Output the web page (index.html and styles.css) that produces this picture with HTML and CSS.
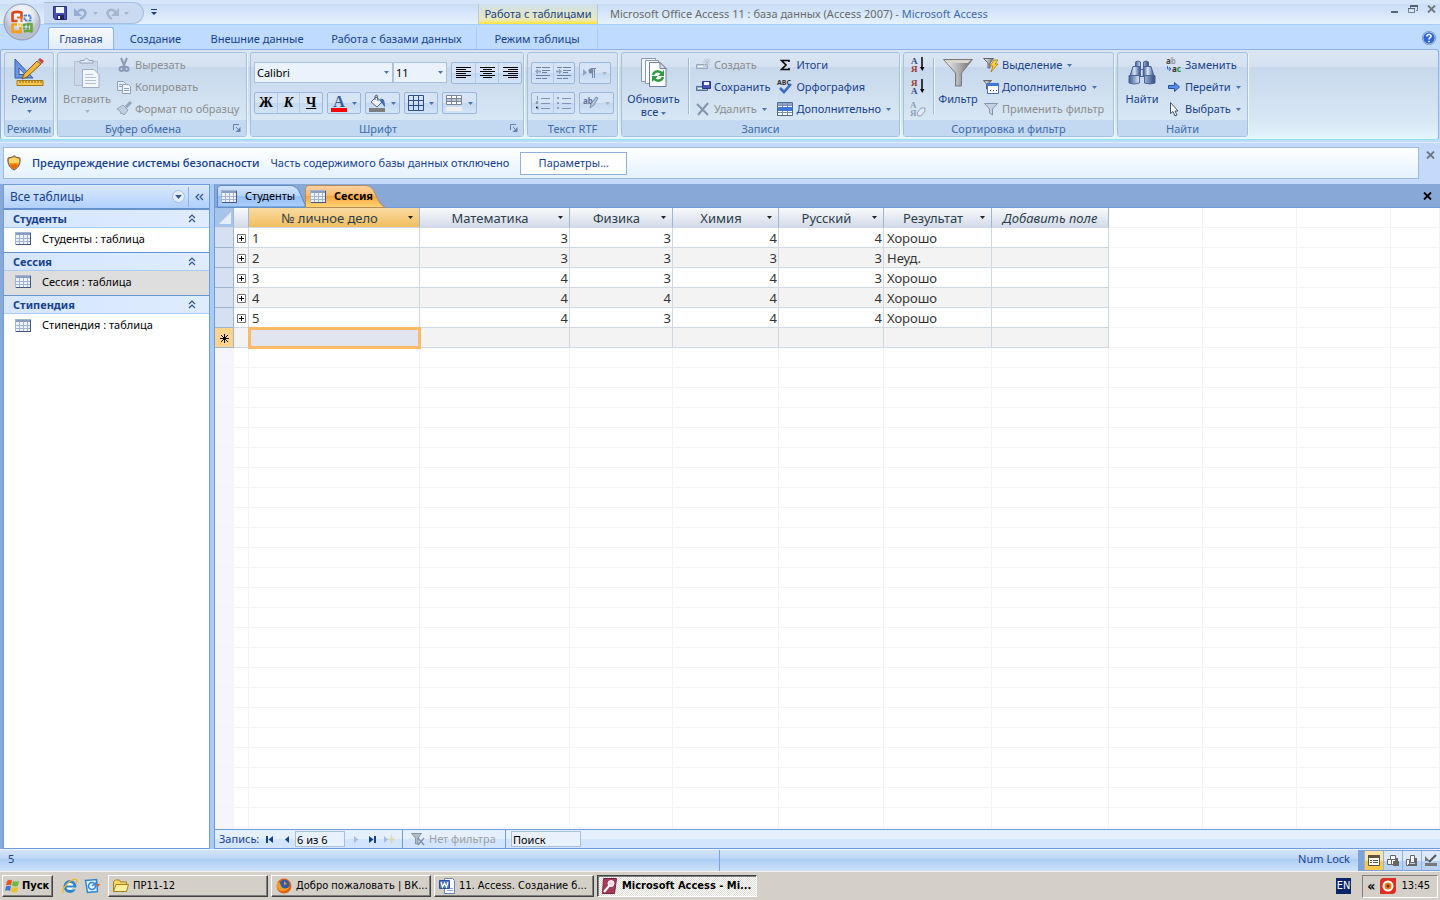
FILE: index.html
```html
<!DOCTYPE html>
<html lang="ru">
<head>
    <meta charset="UTF-8">
    <meta name="viewport" content="width=device-width, initial-scale=1.0">
    <title>Microsoft Access</title>
    <link rel="stylesheet" href="styles.css">
</head>
<body>
    <svg class="defs" aria-hidden="true">
        <linearGradient id="gSilver" x1="0" x2="1"><stop offset="0" stop-color="#f4f4f4"/><stop offset=".5" stop-color="#b5b5b5"/><stop offset="1" stop-color="#686868"/></linearGradient>
        <linearGradient id="gBlue" x1="0" x2="1"><stop offset="0" stop-color="#3e5d92"/><stop offset=".4" stop-color="#dbe8fa"/><stop offset="1" stop-color="#2c4a80"/></linearGradient>
        <linearGradient id="gTab" x1="0" y1="0" x2="0" y2="1"><stop offset="0" stop-color="#d5e5fa"/><stop offset=".5" stop-color="#b5d2f8"/><stop offset=".5" stop-color="#98c1f8"/><stop offset="1" stop-color="#a9ccfb"/></linearGradient>
        <linearGradient id="gTabOn" x1="0" y1="0" x2="0" y2="1"><stop offset="0" stop-color="#fbd3a4"/><stop offset=".45" stop-color="#fbba70"/><stop offset=".5" stop-color="#fba53e"/><stop offset="1" stop-color="#fed879"/></linearGradient>
        <radialGradient id="gOrb" cy=".3"><stop offset="0" stop-color="#fff"/><stop offset=".6" stop-color="#e9eaf0"/><stop offset="1" stop-color="#b9bfcf"/></radialGradient>
        <symbol id="arrow" viewBox="0 0 5 3"><path d="M0 0h5L2.5 3z"/></symbol>
        <symbol id="table" viewBox="0 0 16 13">
            <path fill="#fff" d="M0 0h16v13H0z"/><path fill="#8a9cc0" d="M0 0h16v3H0z"/>
            <path fill="#eef3fb" d="M0 3h16v10H0z"/>
            <path fill="none" stroke="#a3b2cf" d="M.5.5h15v12H.5zM4.500 3v9.500M8.500 3v9.500M12.500 3v9.500M0 6.500h16M0 9.500h16"/>
            <path stroke="#46587f" d="M15.500 1v12M1 12.500h15"/>
        </symbol>
        <symbol id="chev" viewBox="0 0 8 9"><path fill="none" stroke="#2c5590" stroke-width="1.200" d="M1 4l3-3 3 3M1 8l3-3 3 3"/></symbol>
        <symbol id="plus" viewBox="0 0 9 9"><path fill="#fff" stroke="#777" d="M.5.5h8v8h-8z"/><path stroke="#000" d="M2 4.500h5M4.500 2v5"/></symbol>
        <symbol id="cross" viewBox="0 0 9 8"><path fill="none" stroke="currentColor" stroke-width="1.800" d="M1 .5l7 7M8 .5l-7 7"/></symbol>
        <symbol id="launch" viewBox="0 0 8 8"><path fill="none" stroke="#6583ae" d="M.5 6V.5H6M3 3l3 3"/><path fill="#6583ae" d="M7.500 3v5h-5z"/></symbol>
        <symbol id="funnel" viewBox="0 0 32 30"><path fill="url(#gSilver)" stroke="#777" d="M1.500 1.500h29L19.500 15v13h-6V15z"/><path fill="#d8d6cf" d="M3 2h26l-3 3H6z"/></symbol>
    </svg>

    <header class="window-top">
        <button class="office-btn" aria-label="Office">
            <svg viewBox="0 0 38 38">
                <circle cx="19" cy="19" r="18" fill="url(#gOrb)" stroke="#8c9bb8"/>
                <g fill="none" stroke-width="2.600" stroke-linejoin="round">
                    <path stroke="#d8481c" d="M18.500 15V9.500Q13 8 9.500 10v8h5"/>
                    <path stroke="#f2a01b" d="M14 21.500H9.500v7.500q4-1 8 .5V24"/>
                    <path stroke="#6aa838" d="M21 28.500q4-1.500 7.500 0V21h-5"/>
                    <path stroke="#3e86d4" stroke-width="2" stroke-dasharray="2.500 1" d="M21.500 12.500h6v5h-6z"/>
                    <path stroke="#ea6a1c" stroke-width="2" d="M14 14.500h4.500V19"/>
                    <path stroke="#f5c838" stroke-width="2" stroke-dasharray="2.500 1" d="M15 21.500h4v4"/>
                    <path stroke="#4fa05a" stroke-width="2" stroke-dasharray="2.500 1" d="M21 21.500h4v4h-4z"/>
                </g>
            </svg>
        </button>
        <div class="title-bar">
            <div class="quick-access">
                <button aria-label="Сохранить">
                    <svg width="14" height="14" viewBox="0 0 14 14"><path fill="#4a4fb3" stroke="#2c2f80" d="M.5.5h13v13H2l-1.500-2z"/><path fill="#f2f5fc" d="M3 1h8v6H3z"/><path fill="#22245c" d="M4 9h7v5H4z"/><path fill="#e8ecf8" d="M5 10h2v3H5z"/></svg>
                </button>
                <button aria-label="Отменить">
                    <svg width="14" height="13" viewBox="0 0 14 13"><path fill="none" stroke="#96aed0" stroke-width="2.500" d="M3 5.500C8 0 13 4 11 8c-1 2-3 3-5 4"/><path fill="#96aed0" d="M0 1v8h8z"/></svg>
                    <svg class="arrow light"><use href="#arrow"/></svg>
                </button>
                <button aria-label="Повторить">
                    <svg width="14" height="13" viewBox="0 0 14 13"><path fill="none" stroke="#a6b6cc" stroke-width="2.500" d="M11 5.500C6 0 1 4 3 8c1 2 2 3 4 4"/><path fill="#a6b6cc" d="M14 1v8H6z"/></svg>
                    <svg class="arrow light"><use href="#arrow"/></svg>
                </button>
            </div>
            <button class="quick-more" aria-label="Настройка панели">
                <svg width="6" height="6" viewBox="0 0 6 6"><path fill="#1d3f7a" d="M0 0h6v1H0zM0 3h6L3 6z"/></svg>
            </button>
            <div class="context-title">Работа с таблицами</div>
            <h1 class="window-title">Microsoft Office Access 11 : база данных (Access 2007) - <span>Microsoft Access</span></h1>
            <div class="window-controls">
                <button aria-label="Свернуть"><svg width="8" height="9" viewBox="0 0 8 9"><path stroke="#5a6672" stroke-width="2" d="M0 7h7"/></svg></button>
                <button aria-label="Развернуть"><svg width="10" height="9" viewBox="0 0 10 9"><path fill="none" stroke="#76818e" d="M2.500 3V1.500h7v4H8M.5 3.500h6v4h-6z"/><path fill="#56616d" d="M2 0h8v2H2zM0 3h7v1H0z"/></svg></button>
                <button aria-label="Закрыть"><svg width="9" height="8"><use href="#cross"/></svg></button>
            </div>
        </div>
        <nav class="ribbon-tabs">
            <button class="tab active">Главная</button>
            <button class="tab">Создание</button>
            <button class="tab">Внешние данные</button>
            <button class="tab">Работа с базами данных</button>
            <button class="tab context">Режим таблицы</button>
            <button class="help" aria-label="Справка">
                <svg width="14" height="14" viewBox="0 0 14 14"><circle cx="7" cy="7" r="6.300" fill="#2e66d8" stroke="#fff"/><circle cx="7" cy="7" r="6.700" fill="none" stroke="#45689e" stroke-width=".6"/><path fill="none" stroke="#fff" stroke-width="1.600" d="M4.800 5.500C5 2.500 9.300 3 9 5.500 8.800 6.800 7 6.800 7 8.500M7 9.700v1.500"/></svg>
            </button>
        </nav>
    </header>

    <div class="ribbon">
        <section class="group">
            <div class="group-body">
                <button class="big">
                    <svg width="32" height="30" viewBox="0 0 32 30"><path fill="#6f95da" stroke="#315fae" d="M2 1l18 19H2z"/><path fill="#d5e4f8" stroke="#315fae" d="M6 10l6 6.500H6z"/><path fill="#f5c64e" stroke="#a37917" d="M4 22.500h26v5H4z"/><path stroke="#8b6411" d="M7 23v2M10 23v2M13 23v2M16 23v2M19 23v2M22 23v2M25 23v2M28 23v2"/><path fill="#f1b73f" stroke="#7e5a1c" d="M9 21l2-5L24 3l4 3-14 13z"/><path fill="#c84844" d="M25 2l2-2 4 3-2 3z"/></svg>
                    <span>Режим</span>
                    <svg class="arrow"><use href="#arrow"/></svg>
                </button>
            </div>
            <h2>Режимы</h2>
        </section>

        <section class="group clipboard">
            <div class="group-body">
                <button class="big" disabled>
                    <svg width="30" height="30" viewBox="0 0 30 30"><path fill="#ccd8ea" stroke="#b3c1d6" d="M2.500 3.500h23v24h-23z"/><path fill="#e4ebf5" stroke="#92a2bb" d="M8 5V2.500h4C12 0 17 0 17 2.500h4V5z"/><path fill="#f3f7fc" stroke="#9fb0ca" d="M10.500 11.500H22l5 5v13H10.500z"/><path stroke="#b3c1d6" d="M13 16.500h8M13 19.500h11M13 22.500h11M13 25.500h11"/></svg>
                    <span>Вставить</span>
                    <svg class="arrow light"><use href="#arrow"/></svg>
                </button>
                <div class="stack">
                    <button class="cmd" disabled><svg viewBox="0 0 16 16"><path fill="none" stroke="#8a9ab2" stroke-width="2" d="M5 1l4 9M11 1L7 10"/><circle cx="5.500" cy="12" r="2" fill="none" stroke="#8a9ab2" stroke-width="2"/><circle cx="10.500" cy="12" r="2" fill="none" stroke="#8a9ab2" stroke-width="2"/></svg>Вырезать</button>
                    <button class="cmd" disabled><svg viewBox="0 0 16 16"><path fill="#e8eff8" stroke="#8fa0bb" d="M1.500 2.500h6l2 2v7h-8z"/><path fill="#f2f6fc" stroke="#8fa0bb" d="M6.500 5.500h6l2 2v7h-8z"/><path stroke="#8fa0bb" d="M3 5.500h3M3 7.500h3M8 9.500h5M8 11.500h5"/></svg>Копировать</button>
                    <button class="cmd" disabled><svg viewBox="0 0 16 16"><path stroke="#93a4be" stroke-width="3" d="M15 1l-5 5"/><path fill="#c3cfe1" stroke="#93a4be" d="M7 4l5 5-4 5-2-2-1 1-1-3-3-2z"/></svg>Формат по образцу</button>
                </div>
            </div>
            <h2>Буфер обмена<button class="launcher" aria-label="Буфер обмена"><svg><use href="#launch"/></svg></button></h2>
        </section>

        <section class="group font-group">
            <div class="group-body rows">
                <div class="row">
                    <div class="combos">
                        <select class="combo family" aria-label="Шрифт"><option>Calibri</option></select>
                        <select class="combo size" aria-label="Размер"><option>11</option></select>
                    </div>
                    <div class="btn-set">
                        <button aria-label="По левому краю"><svg width="15" height="12"><path stroke="#000" d="M0 .5h15M0 2.500h10M0 4.500h15M0 6.500h10M0 8.500h15M0 10.500h10"/></svg></button>
                        <button aria-label="По центру"><svg width="15" height="12"><path stroke="#000" d="M0 .5h15M3 2.500h9M0 4.500h15M3 6.500h9M0 8.500h15M3 10.500h9"/></svg></button>
                        <button aria-label="По правому краю"><svg width="15" height="12"><path stroke="#000" d="M0 .5h15M5 2.500h10M0 4.500h15M5 6.500h10M0 8.500h15M5 10.500h10"/></svg></button>
                    </div>
                </div>
                <div class="row">
                    <div class="btn-set style-set">
                        <button><b>Ж</b></button>
                        <button><i>К</i></button>
                        <button><u>Ч</u></button>
                    </div>
                    <button class="split"><span class="color-a">A</span><svg class="arrow"><use href="#arrow"/></svg></button>
                    <button class="split" aria-label="Заливка"><svg width="17" height="17" viewBox="0 0 17 17"><path fill="#7e7e7e" d="M0 13h16v4H0z"/><path fill="#edf1f7" stroke="#56657c" d="M2 7l5-5 6 5-5 5z"/><path fill="none" stroke="#56657c" d="M6 5V1l2-1 1 6"/><path fill="#3c6cb6" d="M11 4c4-1 5 2 5 8-2-1-2-4-4-4z"/></svg><svg class="arrow"><use href="#arrow"/></svg></button>
                    <button class="split" aria-label="Сетка"><svg width="16" height="16"><path fill="none" stroke="#2b4f8c" d="M.5.500h15v15H.5zM5.500 0v16M10.500 0v16M0 5.500h16M0 10.500h16"/></svg><svg class="arrow"><use href="#arrow"/></svg></button>
                    <button class="split" aria-label="Цвет строк"><svg width="17" height="16"><path fill="#efefef" d="M0 12h16v4H0z"/><path fill="#fff" stroke="#7b8798" d="M.5.500h15v9H.5z"/><path fill="#b9c3d2" d="M1 4h14v3H1z"/><path stroke="#7b8798" d="M5.500 0v9M10.500 0v9M0 3.500h16M0 6.500h16"/></svg><svg class="arrow"><use href="#arrow"/></svg></button>
                </div>
            </div>
            <h2>Шрифт<button class="launcher" aria-label="Шрифт"><svg><use href="#launch"/></svg></button></h2>
        </section>

        <section class="group rtf">
            <div class="group-body rows">
                <div class="row">
                    <div class="btn-set">
                        <button disabled aria-label="Уменьшить отступ"><svg width="16" height="14"><path stroke="#6c81a6" d="M1 1.500h5M7 1.500h8M7 4.500h8M7 6.500h5M1 9.500h14M1 12.500h5M7 12.500h5" /><path fill="#8fa3c4" d="M0 5.500l3-3v2h3v2H3v2z"/></svg></button>
                        <button disabled aria-label="Увеличить отступ"><svg width="16" height="14"><path stroke="#6c81a6" d="M1 1.500h5M7 1.500h8M7 4.500h8M7 6.500h5M1 9.500h14M1 12.500h5M7 12.500h5" /><path fill="#8fa3c4" d="M6 5.500l-3-3v2H0v2h3v2z"/></svg></button>
                    </div>
                    <button class="split" disabled aria-label="Направление"><svg width="14" height="10"><path fill="#8fa3c4" d="M0 1l4 3.500L0 8z"/><path fill="none" stroke="#7488ab" d="M13 .5H8M9.500 0v10M11.500 0v10"/><circle cx="8" cy="3" r="2.500" fill="#7488ab"/></svg><svg class="arrow light"><use href="#arrow"/></svg></button>
                </div>
                <div class="row">
                    <div class="btn-set">
                        <button disabled aria-label="Нумерация"><svg width="16" height="14"><path stroke="#7f93b6" d="M6 2.500h9M6 7.500h9M6 12.500h9"/><path stroke="#8c9ebd" d="M2.500 0v4M1 5.500h2v1H1v1h2M1 10.500h2v2H1M3 11v3"/></svg></button>
                        <button disabled aria-label="Маркеры"><svg width="16" height="14"><path stroke="#7f93b6" d="M6 2.500h9M6 7.500h9M6 12.500h9"/><path stroke="#8c9ebd" stroke-width="2" d="M1 2h2M1 7h2M1 12h2"/></svg></button>
                    </div>
                    <button class="split" disabled aria-label="Выделение цветом"><svg width="17" height="16"><text x="0" y="9" class="icon-text" fill="#5b6f95">ab</text><path fill="#b8c6dc" stroke="#7a8eb1" d="M15 3l-4 7-4 3 1-4 5-7z"/></svg><svg class="arrow light"><use href="#arrow"/></svg></button>
                </div>
            </div>
            <h2>Текст RTF</h2>
        </section>

        <section class="group records">
            <div class="group-body">
                <button class="big">
                    <svg width="28" height="30" viewBox="0 0 28 30"><path fill="#f3f6fb" stroke="#8a96ab" d="M1.500.5h14v23h-14z"/><path fill="#f8fafd" stroke="#8a96ab" d="M5.500 2.500h13v23h-13z"/><path fill="#fff" stroke="#6e7b92" d="M9.500 4.500H20l6 6v18H9.500z"/><path fill="#dde4ef" stroke="#6e7b92" d="M20 4.500v6h6z"/><path fill="none" stroke="#2f9a3e" stroke-width="2.500" d="M13 17c1-4 6-5 9-1.500M23 19c-1 4-6 5-9 1.500"/><path fill="#2f9a3e" d="M24 12v6h-6zM12 24v-6h6z"/></svg>
                    <span>Обновить<br>все <svg class="arrow"><use href="#arrow"/></svg></span>
                </button>
                <div class="sep"></div>
                <div class="stack">
                    <button class="cmd" disabled><svg viewBox="0 0 16 16"><path fill="#c5d1e2" stroke="#94a6c2" d="M1.500 7.500h11v4h-11z"/><path fill="#fff" d="M3 9h5v1H3z"/><path stroke="#b9c5d6" d="M12 1v8M8 5h8M9 2l6 6M15 2l-6 6"/></svg>Создать</button>
                    <button class="cmd"><svg viewBox="0 0 16 16"><path fill="#9ab3d8" stroke="#506d9d" d="M1.500 7.500h11v4h-11z"/><path fill="#fff" d="M3 9h4v1H3z"/><path fill="#4a54b0" stroke="#2c3480" d="M7.500 2.500h8v7h-8z"/><path fill="#f4f6fb" d="M9 3h5v3H9z"/></svg>Сохранить</button>
                    <button class="cmd" disabled><svg viewBox="0 0 16 16"><path fill="none" stroke="#8594ad" stroke-width="2" d="M2 3l11 11M13 2L3 14"/></svg>Удалить<svg class="arrow"><use href="#arrow"/></svg></button>
                </div>
                <div class="stack">
                    <button class="cmd"><svg viewBox="0 0 16 16"><path fill="none" stroke="#000" stroke-width="1.600" d="M12 5V3.500H4.500L9 8l-4.500 4.500H12V11"/></svg>Итоги</button>
                    <button class="cmd"><svg viewBox="0 0 16 16"><text x="0" y="6" class="abc">ABC</text><path fill="none" stroke="#3a6bc8" stroke-width="2.600" d="M3 9l4 4 7-8"/></svg>Орфография</button>
                    <button class="cmd"><svg viewBox="0 0 16 16"><path fill="#fff" stroke="#51698f" d="M.5 1.500h15v13H.5z"/><path fill="#8fa6cc" d="M1 2h14v2H1z"/><path stroke="#7d8fae" d="M5.500 2v12M10.500 2v12M1 4.500h14M1 11.500h14"/><path fill="#3f77d8" d="M1 6h14v4H1z"/></svg>Дополнительно<svg class="arrow"><use href="#arrow"/></svg></button>
                </div>
            </div>
            <h2>Записи</h2>
        </section>

        <section class="group sort">
            <div class="group-body">
                <div class="stack icons">
                    <button aria-label="По возрастанию"><svg width="16" height="18"><text x="1" y="8" class="az" fill="#2d4b86">А</text><text x="1" y="16" class="az" fill="#9c3434">Я</text><path stroke="#000" stroke-width="1.500" d="M12 1v12"/><path d="M10 11h4.500l-2.200 4z"/></svg></button>
                    <button aria-label="По убыванию"><svg width="16" height="18"><text x="1" y="8" class="az" fill="#9c3434">Я</text><text x="1" y="16" class="az" fill="#2d4b86">А</text><path stroke="#000" stroke-width="1.500" d="M12 1v12"/><path d="M10 11h4.500l-2.200 4z"/></svg></button>
                    <button disabled aria-label="Очистить сортировку"><svg width="16" height="18"><text x="0" y="8" class="az" fill="#8e9db5">А</text><text x="0" y="16" class="az" fill="#8e9db5">Я</text><path fill="#e4eaf4" stroke="#93a3bc" d="M7 13l4-5h4v3l-4 5H8z"/></svg></button>
                </div>
                <div class="sep"></div>
                <button class="big"><svg width="32" height="30"><use href="#funnel"/></svg><span>Фильтр</span></button>
                <div class="stack">
                    <button class="cmd"><svg viewBox="0 0 16 16"><path fill="url(#gSilver)" stroke="#666" d="M.5 1.500h10L7 6v5H5V6z"/><path fill="#fbd23c" stroke="#a87718" stroke-width=".8" d="M11 3h4l-3 4h3l-7 8 2-6H7z"/></svg>Выделение<svg class="arrow"><use href="#arrow"/></svg></button>
                    <button class="cmd"><svg viewBox="0 0 16 16"><path fill="url(#gSilver)" stroke="#666" d="M.5 1.500h8L5.500 5v5h-2V5z"/><path fill="#fff" stroke="#4a6fb4" d="M4.500 5.500h11v9h-11z"/><path fill="#3f77d8" d="M4 4h12v3H4z"/><path fill="#444" d="M7 11h1v1H7zM10 11h1v1h-1zM13 11h1v1h-1z"/></svg>Дополнительно<svg class="arrow"><use href="#arrow"/></svg></button>
                    <button class="cmd" disabled><svg viewBox="0 0 16 16"><path fill="#c6d0e0" stroke="#8493ab" d="M1.500 2.500h13L9.500 8v6l-3-2V8z"/></svg>Применить фильтр</button>
                </div>
            </div>
            <h2>Сортировка и фильтр</h2>
        </section>

        <section class="group find">
            <div class="group-body">
                <button class="big">
                    <svg width="30" height="30" viewBox="0 0 30 30"><g fill="url(#gBlue)" stroke="#4a6598" stroke-linejoin="round"><path d="M8.500 4q2.500-2 5 0v5h-5zM16.500 4q2.500-2 5 0v5h-5z"/><path d="M12.500 11.500h5v7h-5z"/><path d="M6 8.500h7.500v9.500H3z"/><path d="M16.500 8.500H24l3 9.500H16.500z"/><path d="M2 17.500h10.500v7.500q-5 2-10.500 0zM17.500 17.500H28v7.500q-5 2-10.500 0z"/></g></svg>
                    <span>Найти</span>
                </button>
                <div class="stack">
                    <button class="cmd"><svg viewBox="0 0 16 16"><text x="0" y="7" class="icon-text" fill="#444">a<tspan fill="#999">b</tspan></text><text x="6" y="15" class="icon-text" fill="#333">a<tspan fill="#1b8f2f">c</tspan></text><path fill="none" stroke="#3a6bc8" d="M1.500 9v3h3M3 10l2 2-2 2"/></svg>Заменить</button>
                    <button class="cmd"><svg viewBox="0 0 16 16"><path fill="#5b8ee8" stroke="#1f4fa8" d="M2.500 6.500h6v-3l5 4.500-5 4.500v-3h-6z"/></svg>Перейти<svg class="arrow"><use href="#arrow"/></svg></button>
                    <button class="cmd"><svg viewBox="0 0 16 16"><path fill="#fff" stroke="#44536b" d="M4.500 1.500v11l2.500-2 2 4.500 2-1-2-4h3z"/></svg>Выбрать<svg class="arrow"><use href="#arrow"/></svg></button>
                </div>
            </div>
            <h2>Найти</h2>
        </section>
    </div>

    <div class="message-bar">
        <div class="message">
            <svg width="14" height="16" viewBox="0 0 14 16"><path fill="#f59a1d" stroke="#5b5b5b" d="M7 .7l2 1.500 4 .8c.5 5-.5 9-6 12C1.500 12 .5 8 1 3l4-.8z"/><path fill="#ffd66b" d="M7 2.500L12 4v4H2V4z"/><path fill="#e8690c" d="M3 10c3-1 6-1 8 0-1 2-2 3-4 4-2-1-3-2-4-4z"/></svg>
            <strong>Предупреждение системы безопасности</strong>
            <span>Часть содержимого базы данных отключено</span>
            <button class="options">Параметры...</button>
        </div>
        <button class="message-close" aria-label="Закрыть"><svg width="9" height="8"><use href="#cross"/></svg></button>
    </div>

    <main class="workspace">
        <aside class="nav-pane">
            <div class="nav-head">
                <span>Все таблицы</span>
                <button class="nav-menu" aria-label="Меню"><svg width="7" height="4"><use href="#arrow"/></svg></button>
                <button class="nav-fold" aria-label="Свернуть"><svg width="8" height="8"><path fill="none" stroke="#2c5590" stroke-width="1.200" d="M4 1L1 4l3 3M8 1L5 4l3 3"/></svg></button>
            </div>
            <button class="nav-group">Студенты<svg><use href="#chev"/></svg></button>
            <a href="#" class="nav-item"><svg><use href="#table"/></svg>Студенты : таблица</a>
            <button class="nav-group">Сессия<svg><use href="#chev"/></svg></button>
            <a href="#" class="nav-item selected"><svg><use href="#table"/></svg>Сессия : таблица</a>
            <button class="nav-group">Стипендия<svg><use href="#chev"/></svg></button>
            <a href="#" class="nav-item"><svg><use href="#table"/></svg>Стипендия : таблица</a>
        </aside>

        <div class="document">
            <div class="doc-tabs">
                <button class="doc-tab">
                    <svg class="shape" viewBox="0 0 88 23" preserveAspectRatio="none"><path fill="url(#gTab)" stroke="#5b86bf" d="M.5 23V4Q.5.500 4 .5h69q7 0 10 8l5 12v2.500z"/></svg>
                    <svg class="tab-icon"><use href="#table"/></svg>Студенты
                </button>
                <button class="doc-tab active">
                    <svg class="shape" viewBox="0 0 80 23" preserveAspectRatio="none"><path fill="url(#gTabOn)" stroke="#b58a52" d="M.5 23.500V4Q.5.500 4 .5h56q7 0 10 8 5 13 10 15z"/></svg>
                    <svg class="tab-icon"><use href="#table"/></svg>Сессия
                </button>
                <button class="doc-close" aria-label="Закрыть"><svg width="9" height="8"><use href="#cross"/></svg></button>
            </div>
            <div class="sheet-wrap">
                <table class="sheet">
                    <colgroup>
                        <col class="c-sel"><col class="c-exp"><col class="c-id"><col class="c-math"><col class="c-phys"><col class="c-chem"><col class="c-rus"><col class="c-res"><col class="c-add"><col class="c-blank"><col class="c-blank"><col class="c-blank"><col>
                    </colgroup>
                    <thead>
                        <tr>
                            <th class="corner"><svg width="12" height="12"><path fill="#e6eef9" d="M12 0v12H0z"/></svg></th>
                            <th></th>
                            <th class="current"><div><span>№ личное дело</span><svg class="arrow"><use href="#arrow"/></svg></div></th>
                            <th><div><span>Математика</span><svg class="arrow"><use href="#arrow"/></svg></div></th>
                            <th><div><span>Физика</span><svg class="arrow"><use href="#arrow"/></svg></div></th>
                            <th><div><span>Химия</span><svg class="arrow"><use href="#arrow"/></svg></div></th>
                            <th><div><span>Русский</span><svg class="arrow"><use href="#arrow"/></svg></div></th>
                            <th><div><span>Результат</span><svg class="arrow"><use href="#arrow"/></svg></div></th>
                            <th class="add">Добавить поле</th>
                            <td class="ghost"></td><td class="ghost"></td><td class="ghost"></td><td class="ghost"></td>
                        </tr>
                    </thead>
                    <tbody>
                        <tr><th></th><td class="exp"><svg><use href="#plus"/></svg></td><td>1</td><td class="num">3</td><td class="num">3</td><td class="num">4</td><td class="num">4</td><td>Хорошо</td><td></td><td class="ghost"></td><td class="ghost"></td><td class="ghost"></td><td class="ghost"></td></tr>
                        <tr><th></th><td class="exp"><svg><use href="#plus"/></svg></td><td>2</td><td class="num">3</td><td class="num">3</td><td class="num">3</td><td class="num">3</td><td>Неуд.</td><td></td><td class="ghost"></td><td class="ghost"></td><td class="ghost"></td><td class="ghost"></td></tr>
                        <tr><th></th><td class="exp"><svg><use href="#plus"/></svg></td><td>3</td><td class="num">4</td><td class="num">3</td><td class="num">4</td><td class="num">3</td><td>Хорошо</td><td></td><td class="ghost"></td><td class="ghost"></td><td class="ghost"></td><td class="ghost"></td></tr>
                        <tr><th></th><td class="exp"><svg><use href="#plus"/></svg></td><td>4</td><td class="num">4</td><td class="num">4</td><td class="num">4</td><td class="num">4</td><td>Хорошо</td><td></td><td class="ghost"></td><td class="ghost"></td><td class="ghost"></td><td class="ghost"></td></tr>
                        <tr><th></th><td class="exp"><svg><use href="#plus"/></svg></td><td>5</td><td class="num">4</td><td class="num">3</td><td class="num">4</td><td class="num">4</td><td>Хорошо</td><td></td><td class="ghost"></td><td class="ghost"></td><td class="ghost"></td><td class="ghost"></td></tr>
                        <tr class="new"><th><svg width="9" height="9"><path stroke="#000" d="M4.500 0v9M0 4.500h9M1 1l7 7M8 1L1 8"/></svg></th><td></td><td class="editing"></td><td></td><td></td><td></td><td></td><td></td><td></td><td class="ghost"></td><td class="ghost"></td><td class="ghost"></td><td class="ghost"></td></tr>
                        <tr class="rest"><td class="ghost"></td><td class="ghost"></td><td class="ghost"></td><td class="ghost"></td><td class="ghost"></td><td class="ghost"></td><td class="ghost"></td><td class="ghost"></td><td class="ghost"></td><td class="ghost"></td><td class="ghost"></td><td class="ghost"></td><td class="ghost"></td></tr>
                    </tbody>
                </table>
            </div>
            <div class="record-nav">
                <label for="record">Запись:</label>
                <button aria-label="Первая"><svg width="7" height="7"><path d="M0 0h2v7H0zM7 0v7L2.500 3.500z"/></svg></button>
                <button aria-label="Предыдущая"><svg width="4" height="7"><path d="M4 0v7L0 3.500z"/></svg></button>
                <input id="record" class="record-no" type="text" value="6 из 6">
                <button disabled aria-label="Следующая"><svg width="4" height="7"><path d="M0 0v7l4-3.500z"/></svg></button>
                <button aria-label="Последняя"><svg width="7" height="7"><path d="M5 0h2v7H5zM0 0v7l4.500-3.500z"/></svg></button>
                <button disabled aria-label="Новая"><svg width="11" height="9"><path d="M0 1v7l4-3.500z"/><path stroke="#dcd8b4" d="M7.500 0v9M4 4.500h7M5 2l5 5M10 2L5 7"/></svg></button>
                <span class="no-filter"><svg width="14" height="13"><path fill="#b3bccb" stroke="#8693a8" d="M.5.500h10L7 5v6H4.500V5z"/><path stroke="#8693a8" stroke-width="1.500" d="M7 5l6 7M13 5l-6 7"/></svg>Нет фильтра</span>
                <input class="search" type="text" value="Поиск" aria-label="Поиск">
            </div>
        </div>
    </main>

    <footer class="status-bar">
        <div class="status-text">5</div>
        <div class="status-side">
            <div class="status-keys">Num Lock</div>
            <div class="view-buttons">
                <button class="active" aria-label="Таблица"><svg width="12" height="11"><path fill="#fff" stroke="#5d5440" d="M.5.500h11v10H.5z"/><path fill="#5d5440" d="M0 0h12v3H0zM2 5h2v1H2zM5 5h5v1H5zM2 7h2v1H2zM5 7h5v1H5z"/></svg></button>
                <button aria-label="Сводная таблица"><svg width="12" height="11"><path fill="#fff" stroke="#666" d="M3.500.500h5v4h-5zM.5 4.500h8v5h-8zM4.500 4v6"/><path fill="#666" d="M6 6h6v5H6zM8 3h3v3H8z"/></svg></button>
                <button aria-label="Сводная диаграмма"><svg width="12" height="11"><path fill="#fff" stroke="#666" d="M.5 4.500h3v6h-3zM4.500.500h4v7h-4z"/><path fill="none" stroke="#666" stroke-width="2" d="M2 10h8V3"/></svg></button>
                <button aria-label="Конструктор"><svg width="12" height="11"><path fill="#777" d="M0 8h12v3H0zM0 1l5 5H0z"/><path stroke="#555" stroke-width="2" d="M11 0L4 7"/></svg></button>
            </div>
        </div>
    </footer>

    <div class="taskbar">
        <button class="start"><svg width="15" height="14" viewBox="0 0 15 14"><path fill="#e2542c" d="M2 2q3-2 5-.5L6 6.500Q4 5 1 6.500z"/><path fill="#6dbb3c" d="M8 2q3 1 6 0l-1 5q-3 1-6-.5z"/><path fill="#3c78d2" d="M1 7.500Q4 6 6 7.500L5 12q-2-1.500-5 0z"/><path fill="#f4bf2b" d="M7 8q3 1 6 0l-1 5q-3 1-6-.5z"/></svg>Пуск</button>
        <div class="quick-launch">
            <a href="#" aria-label="Internet Explorer"><svg width="16" height="16"><circle cx="8" cy="8.500" r="5" fill="#fff" stroke="#2b86d8" stroke-width="3"/><path stroke="#2b86d8" stroke-width="2" d="M4 8.500h9"/><path stroke="#d4d0c8" stroke-width="2" d="M10 10.500h6"/><path fill="none" stroke="#f0b52c" stroke-width="1.300" d="M1 15C-1 11 9 0 14 1.500q2 1 0 4"/></svg></a>
            <a href="#" aria-label="Outlook Express"><svg width="16" height="16"><path fill="#e8f3fd" stroke="#2b86d8" stroke-width="1.500" d="M1.500 2.500l11-1 1 12-10 1z"/><circle cx="8" cy="8" r="3.500" fill="none" stroke="#2b86d8" stroke-width="1.600"/><path fill="none" stroke="#2b86d8" stroke-width="1.500" d="M8 8l5-4"/><path fill="#d8552a" d="M12 6h4l-2 3z"/></svg></a>
        </div>
        <button class="task"><svg viewBox="0 0 16 16"><path fill="#f6d86a" stroke="#a6801c" d="M.5 3.500l2-1.500h4l1 2h6v9.500H.5z"/><path fill="#fdeea2" stroke="#a6801c" d="M3 6.500h12.500l-2 7H.5z"/></svg><span>ПР11-12</span></button>
        <button class="task"><svg viewBox="0 0 16 16"><circle cx="8" cy="8" r="7.500" fill="#dd6415"/><circle cx="8.500" cy="6.500" r="4.800" fill="#2b5ea8"/><path fill="#f49b25" d="M1 4c3 0 4 3 4 4 1 3 6 3 8 1-1 5-10 6-12 0zM8 3l3 3-3 1z"/></svg><span>Добро пожаловать | ВК...</span></button>
        <button class="task"><svg viewBox="0 0 16 16"><path fill="#fff" stroke="#6783b8" d="M5.500.500h8l2 2v13h-10z"/><path stroke="#8da6d2" d="M8 10.500h6M8 12.500h6"/><path fill="#4a79c8" stroke="#2a519a" d="M.5 2.500h10v8H.5z"/><path fill="none" stroke="#fff" stroke-width="1.300" d="M2 4l1.500 5L5.500 5l2 4L9 4"/></svg><span>11. Access. Создание б...</span></button>
        <button class="task active"><svg viewBox="0 0 16 16"><path fill="#a33a5c" stroke="#7d2342" d="M1.500.500h13l-2 15H.5z"/><circle cx="9" cy="5.500" r="3" fill="#f5dbe3" stroke="#fff"/><path stroke="#fff" stroke-width="2" d="M7 8l-5 6"/></svg><span>Microsoft Access - Mi...</span></button>
        <div class="tray-area">
            <span class="lang">EN</span>
            <div class="tray">
                <span class="tray-fold">«</span>
                <svg width="16" height="16"><path fill="#dd2f20" d="M4 0h12v12q0 4-4 4H0V4q0-4 4-4z"/><circle cx="8" cy="8" r="5.500" fill="#fff"/><circle cx="8" cy="8" r="3.500" fill="#e57a18"/><circle cx="8" cy="8" r="1.500" fill="#8c2210"/></svg>
                <time>13:45</time>
            </div>
        </div>
    </div>
</body>
</html>
```
FILE: styles.css
```css
:root {
    --text: #15428b;
    --muted: #8d8d8d;
    --line: #d0d7e5;
    --frame: #6f9dd9;
    --ui: "Noto Sans", "Open Sans", sans-serif;
    --classic: "DejaVu Sans Condensed", "DejaVu Sans", sans-serif;
}
* {
    box-sizing: border-box;
}
body {
    margin: 0;
    height: 100vh;
    display: flex;
    flex-direction: column;
    overflow: hidden;
    background: #bfdbff;
    color: var(--text);
    font: 11px/14px var(--ui);
}
button, input, select {
    font: inherit;
    color: inherit;
}
button {
    border: none;
    background: none;
    padding: 0;
    white-space: nowrap;
}
button:disabled {
    color: var(--muted);
}
svg {
    display: block;
    flex: none;
    overflow: visible;
}
h1, h2 {
    margin: 0;
    font: inherit;
}
.defs {
    position: absolute;
    width: 0;
    height: 0;
}
.arrow {
    width: 5px;
    height: 3px;
    fill: #4a74ad;
}
.arrow.light {
    fill: #a9b5c5;
}

/* title bar and tabs */
.window-top {
    position: relative;
}
.office-btn {
    position: absolute;
    left: 3px;
    top: 3px;
    z-index: 2;
}
.office-btn svg {
    width: 38px;
    height: 38px;
}
.title-bar {
    display: flex;
    height: 25px;
    background: linear-gradient(#d6e6fa 0, #d6e6fa 4px, #c9ddf7 4px, #e6f1fe 24px);
    border-bottom: 1px solid #a9cdf8;
}
.quick-access {
    display: flex;
    align-items: center;
    gap: 7px;
    width: 100px;
    height: 22px;
    margin: 2px 0 0 44px;
    padding-left: 9px;
    background: #cadbf1;
    border: 1px solid #a7c1e3;
    border-left: none;
    border-radius: 0 11px 11px 0;
}
.quick-access button {
    display: flex;
    align-items: center;
    gap: 5px;
}
.quick-more {
    width: 20px;
    display: flex;
    justify-content: center;
    align-items: center;
}
.context-title {
    width: 120px;
    margin: 4px 0 0 314px;
    padding-top: 3px;
    text-align: center;
    white-space: nowrap;
    background: linear-gradient(#cfe0ee, #ece9b5 80%, #ffe62e);
    border: solid #b7cbe0;
    border-width: 0 1px;
}
.window-title {
    flex: 1;
    padding: 7px 0 0 12px;
    color: #696969;
    white-space: nowrap;
}
.window-title span {
    color: #3e6aaa;
}
.window-controls {
    display: flex;
    gap: 9px;
    padding: 5px 4px 0 0;
    color: #6b7783;
    align-items: flex-start;
}
.ribbon-tabs {
    display: grid;
    grid-template-columns: 66px 83px 120px 159px 122px 1fr;
    height: 24px;
    padding: 2px 4px 0 48px;
}
.tab {
    padding-top: 2px;
}
.tab.active {
    padding-top: 0;
    background: linear-gradient(#f7fafe, #e2ecf8);
    border: 1px solid #8db2e3;
    border-bottom: none;
    border-radius: 3px 3px 0 0;
}
.tab.context {
    border: solid #aecaf0;
    border-width: 0 1px;
}
.help {
    justify-self: end;
}

/* ribbon */
.ribbon {
    display: grid;
    grid-template-columns: 50px 190px 274px 91px 279px 211px 131px;
    gap: 3px;
    margin: 0 1px 0 0;
    padding: 2px 3px;
    height: 91px;
    border: 1px solid #8db2e3;
    border-bottom-color: #8de4ee;
    border-radius: 3px;
    background: linear-gradient(#dbe6f4 0, #d5e1f0 17px, #c7d8ed 17px, #d8e7f4 70px, #e3f5fd);
}
.group {
    display: flex;
    flex-direction: column;
    border: 1px solid #a4c1dd;
    border-radius: 3px;
    box-shadow: 1px 1px 0 #eef5fb;
    overflow: hidden;
}
.group-body {
    flex: 1;
    display: flex;
    padding-top: 1px;
}
.group h2 {
    position: relative;
    height: 16px;
    line-height: 18px;
    text-align: center;
    background: #c2d9f1;
    color: #3e6aaa;
}
.clipboard h2, .font-group h2 {
    padding-right: 18px;
}
.launcher {
    position: absolute;
    right: 5px;
    top: 4px;
}
.launcher svg {
    width: 8px;
    height: 8px;
}
.big {
    display: flex;
    flex-direction: column;
    align-items: center;
    width: 58px;
    padding-top: 4px;
}
.big > svg:first-child {
    margin-bottom: 4px;
}
.big > .arrow {
    margin-top: 5px;
}
.big span {
    line-height: 13px;
}
.big span .arrow {
    display: inline-block;
    vertical-align: middle;
}
.group:first-child .big {
    width: 48px;
}
.stack {
    display: flex;
    flex-direction: column;
}
.cmd {
    display: flex;
    align-items: center;
    height: 22px;
    gap: 3px;
}
.cmd > svg:first-child {
    width: 16px;
    height: 16px;
}
.cmd .arrow {
    margin-left: 2px;
}
.sep {
    width: 1px;
    height: 56px;
    margin: 4px 6px 0 3px;
    background: #9dbbdb;
    box-shadow: 1px 0 0 #eef5fb;
}
.stack + .stack {
    margin-left: 7px;
}
.records .big {
    width: 63px;
}
.sort .icons {
    padding-left: 6px;
}
.icons button {
    height: 22px;
}
.sort .sep {
    margin: 4px 0 0 7px;
}
.sort .big, .find .big {
    width: 48px;
}
.sort .big + .stack {
    margin-left: 1px;
}
.icon-text {
    font: bold 8px var(--ui);
}
.abc {
    font: bold 7px var(--ui);
    fill: #333;
}
.az {
    font: bold 9px "Liberation Serif", serif;
}
.group-body.rows {
    flex-direction: column;
    gap: 8px;
    padding: 9px 3px 0;
}
.row {
    display: flex;
    gap: 4px;
}
.combos {
    display: flex;
}
.combo {
    appearance: none;
    height: 21px;
    padding: 0 2px;
    border: 1px solid #abc1de;
    border-radius: 0;
    color: #000;
    background: #eaf2fb url("data:image/svg+xml,%3Csvg xmlns='http://www.w3.org/2000/svg' width='5' height='3'%3E%3Cpath fill='%234a74ad' d='M0 0h5L2.500 3z'/%3E%3C/svg%3E") no-repeat right 3px center;
}
.family {
    width: 139px;
}
.size {
    width: 54px;
}
.btn-set, .split {
    display: flex;
    align-items: center;
    height: 22px;
    border: 1px solid #9ab7dd;
    border-radius: 2px;
    background: linear-gradient(#d6e4f5 50%, #c3d8f0 50%, #d3e4f6);
}
.btn-set button {
    display: flex;
    justify-content: center;
    align-items: center;
    width: 23px;
    height: 20px;
}
.btn-set button + button {
    border-left: 1px solid #b3cae8;
}
.split {
    gap: 5px;
    padding: 0 3px;
}
.style-set button {
    color: #000;
    font: bold 14px "Liberation Serif", serif;
}
.style-set {
    width: 69px;
}
.style-set button {
    flex: 1;
}
.color-a {
    width: 16px;
    height: 17px;
    border-bottom: 4px solid #f00;
    color: #3b5b95;
    font: bold 16px/13px "Liberation Serif", serif;
}
.rtf .btn-set button {
    width: 21px;
}

/* security message */
.message-bar {
    display: flex;
    justify-content: space-between;
    margin-top: 2px;
    padding: 4px 5px 5px 3px;
    height: 42px;
    border-top: 1px solid #dfeafa;
    background: #c4dafa;
}
.message {
    flex: 1;
    display: flex;
    align-items: center;
    gap: 11px;
    padding-left: 3px;
    margin-right: 7px;
    border: 1px solid #9ebbdc;
    background: linear-gradient(#fff, #e4f1fd);
}
.message strong {
    font-family: "Open Sans", var(--ui);
    font-weight: 600;
}
.options {
    width: 107px;
    height: 23px;
    border: 1px solid #8fb0d8;
    background: #fff;
}
.message-close {
    align-self: flex-start;
    padding: 4px 0;
    color: #6b7783;
}

/* navigation pane */
.workspace {
    flex: 1;
    min-height: 0;
    display: flex;
    padding-left: 3px;
    background: #88a9d7;
}
.nav-pane {
    width: 207px;
    border: 1px solid var(--frame);
    background: #fff;
    display: flex;
    flex-direction: column;
}
.nav-head {
    display: flex;
    align-items: center;
    height: 25px;
    padding-left: 6px;
    font-size: 12px;
    background: linear-gradient(#dbe9fc, #b1d0fb);
    border-bottom: 2px solid #6593cf;
}
.nav-head span {
    flex: 1;
    padding-top: 1px;
}
.nav-menu {
    display: flex;
    justify-content: center;
    align-items: center;
    width: 13px;
    height: 13px;
    border: 1px solid #a9bfdd;
    border-radius: 50%;
    background: #e3edfa;
    margin-right: 3px;
}
.nav-menu svg {
    fill: #35588f;
}
.nav-fold {
    display: flex;
    justify-content: center;
    align-items: center;
    width: 21px;
    height: 20px;
    border-left: 1px solid #8db2e3;
}
.nav-group {
    display: flex;
    align-items: center;
    justify-content: space-between;
    height: 18px;
    padding: 0 13px 0 9px;
    font-weight: bold;
    background: linear-gradient(90deg, #d5e6fd, #dfecfe);
    border-bottom: 1px solid #a9cbf8;
}
.nav-group svg {
    width: 8px;
    height: 9px;
}
.nav-item {
    display: flex;
    align-items: center;
    gap: 11px;
    height: 25px;
    padding: 0 0 3px 11px;
    color: #000;
    text-decoration: none;
    border-bottom: 1px solid #6593cf;
}
.nav-item:last-child {
    border-bottom: none;
}
.nav-item svg {
    width: 16px;
    height: 13px;
}
.nav-item.selected {
    background: #dedede;
}

/* document tabs */
.document {
    flex: 1;
    min-width: 0;
    display: flex;
    flex-direction: column;
    border-left: 1px solid var(--frame);
    box-shadow: -4px 0 0 #a9cbf8;
    margin-left: 4px;
}
.doc-tabs {
    display: flex;
    height: 24px;
    padding: 1px 8px 0 2px;
    border-bottom: 1px solid var(--frame);
}
.doc-tab {
    position: relative;
    isolation: isolate;
    display: flex;
    align-items: center;
    gap: 8px;
    width: 88px;
    padding-left: 4px;
    color: #000;
}
.doc-tab.active {
    width: 80px;
    padding-left: 5px;
    font-weight: bold;
}
.doc-tab .shape {
    position: absolute;
    left: 0;
    top: 0;
    width: 100%;
    height: 100%;
    z-index: -1;
}
.tab-icon {
    width: 16px;
    height: 13px;
}
.doc-close {
    margin-left: auto;
    color: #000;
}

/* datasheet */
.sheet-wrap {
    flex: 1;
    min-height: 0;
    overflow: hidden;
    background: #fff;
}
.sheet {
    width: 100%;
    height: 100%;
    table-layout: fixed;
    border-collapse: separate;
    border-spacing: 0;
    font-size: 13px;
    line-height: 18px;
    color: #333;
}
.c-sel { width: 19px; }
.c-exp { width: 15px; }
.c-id { width: 171px; }
.c-math { width: 150px; }
.c-phys { width: 103px; }
.c-chem { width: 106px; }
.c-rus { width: 105px; }
.c-res { width: 108px; }
.c-add { width: 117px; }
.c-blank { width: 94px; }
.sheet th, .sheet td {
    height: 20px;
    padding: 1px 3px 0;
    border: solid var(--line);
    border-width: 0 1px 1px 0;
    font-weight: normal;
    white-space: nowrap;
}
.sheet thead th {
    padding: 0;
    background: linear-gradient(#f8fafc, #d3dbe9);
    border-right-color: #9eb6ce;
    color: #2d3e4a;
}
.sheet thead th.current {
    background: linear-gradient(#f9dba1, #f2be5f);
}
.sheet thead th.corner {
    background: #a9c4e9;
    vertical-align: bottom;
}
.corner svg {
    margin: 0 0 3px 4px;
}
.sheet thead div {
    display: flex;
    align-items: center;
    padding-right: 6px;
}
.sheet thead span {
    flex: 1;
    padding-left: 2px;
    text-align: center;
}
.sheet thead .arrow {
    fill: #222;
}
.sheet thead th.add {
    font-style: italic;
}
.sheet tbody th {
    background: #d5e1f2;
    border-color: #9eb6ce;
}
.sheet tbody tr:nth-child(even) td:not(.ghost) {
    background: #f3f3f3;
}
.sheet .exp svg {
    width: 9px;
    height: 9px;
}
.sheet .num {
    text-align: right;
    padding-right: 1px;
}
.sheet tbody .new th {
    background: #ffd58d;
}
.sheet .new svg {
    margin: auto;
}
.sheet tbody tr.new td.editing:not(.ghost) {
    background: #e1e5ef;
    outline: 3px solid #fdba66;
    outline-offset: -2px;
}
.sheet .ghost {
    border-color: #f4f4f7;
}
.sheet .rest td {
    height: 100%;
    border-bottom: none;
    background: repeating-linear-gradient(transparent 0, transparent 19px, #f4f4f7 19px, #f4f4f7 20px);
}
.sheet .rest td:first-child {
    background-color: #f5f5fb;
}

/* record navigation */
.record-nav {
    display: flex;
    align-items: center;
    height: 20px;
    padding-left: 4px;
    border: solid var(--frame);
    border-width: 1px 0;
    background: linear-gradient(#e6f0fd 50%, #d3e5fd 50%);
}
.record-nav button {
    display: flex;
    justify-content: center;
    width: 17px;
    fill: #15428b;
}
.record-nav button:disabled {
    fill: #a3bde2;
}
.record-nav label {
    width: 42px;
}
.record-nav input {
    height: 16px;
    padding: 0 1px;
    border: 1px solid #a9bfe0;
    background: #e9f1fc;
    color: #000;
}
.record-no {
    width: 50px;
    margin-right: 2px;
}
.no-filter {
    display: flex;
    align-items: center;
    gap: 4px;
    align-self: stretch;
    width: 104px;
    margin: 0 5px 0 4px;
    padding-left: 8px;
    border: solid var(--frame);
    border-width: 0 1px;
    color: #9f9f9f;
    white-space: nowrap;
}
.search {
    width: 70px;
}

/* status bar */
.status-bar {
    display: grid;
    grid-template-columns: 1fr 1fr;
    height: 22px;
    border-top: 1px solid #e8f1fd;
    background: linear-gradient(#d5e5fa 0, #bcd5f6 9px, #acccf4 9px, #cfe2fa);
}
.status-text {
    padding: 2px 0 0 8px;
    border-right: 1px solid #7fa5d6;
}
.status-side {
    display: flex;
}
.status-keys {
    flex: 1;
    padding: 2px 8px 0;
    border-right: 1px solid #7fa5d6;
    text-align: right;
}
.view-buttons {
    display: flex;
    padding: 1px 0 1px 5px;
    background: #7ba3d9;
}
.view-buttons button {
    display: flex;
    justify-content: center;
    align-items: center;
    width: 19px;
    background: linear-gradient(#dce9fa 50%, #b9d2f2 50%);
    border-left: 1px solid #8fb3e2;
}
.view-buttons button.active {
    background: linear-gradient(#fde3a6 50%, #fcc54c 50%);
}

/* taskbar */
.taskbar {
    display: flex;
    align-items: center;
    height: 29px;
    padding: 0 2px;
    border-top: 1px solid #f4f2ee;
    background: #d4d0c8;
    color: #000;
    font: 11px/14px var(--classic);
}
.start, .task {
    display: flex;
    align-items: center;
    gap: 4px;
    height: 22px;
    border: 1px solid;
    border-color: #fff #404040 #404040 #fff;
    box-shadow: inset -1px -1px 0 #808080;
}
.start {
    width: 51px;
    padding-left: 2px;
    gap: 2px;
    font-weight: bold;
}
.quick-launch {
    display: flex;
    gap: 6px;
    padding: 0 8px 0 9px;
}
.task {
    width: 160px;
    margin-right: 3px;
    padding: 0 4px;
}
.task svg {
    width: 16px;
    height: 16px;
}
.task.active {
    border-color: #404040 #fff #fff #404040;
    box-shadow: inset 1px 1px 0 #808080;
    background: repeating-conic-gradient(#fff 0 25%, #dedbd5 0 50%) 0 0 / 2px 2px;
    font-weight: bold;
}
.tray-area {
    display: flex;
    align-items: center;
    margin-left: auto;
}
.lang {
    padding: 1px;
    background: #0a246a;
    color: #fff;
}
.tray {
    display: flex;
    align-items: center;
    gap: 5px;
    height: 23px;
    margin-left: 11px;
    padding: 0 7px 0 4px;
    border: 1px solid;
    border-color: #808080 #fff #fff #808080;
}
.tray-fold {
    font-size: 14px;
    font-weight: bold;
}
```
